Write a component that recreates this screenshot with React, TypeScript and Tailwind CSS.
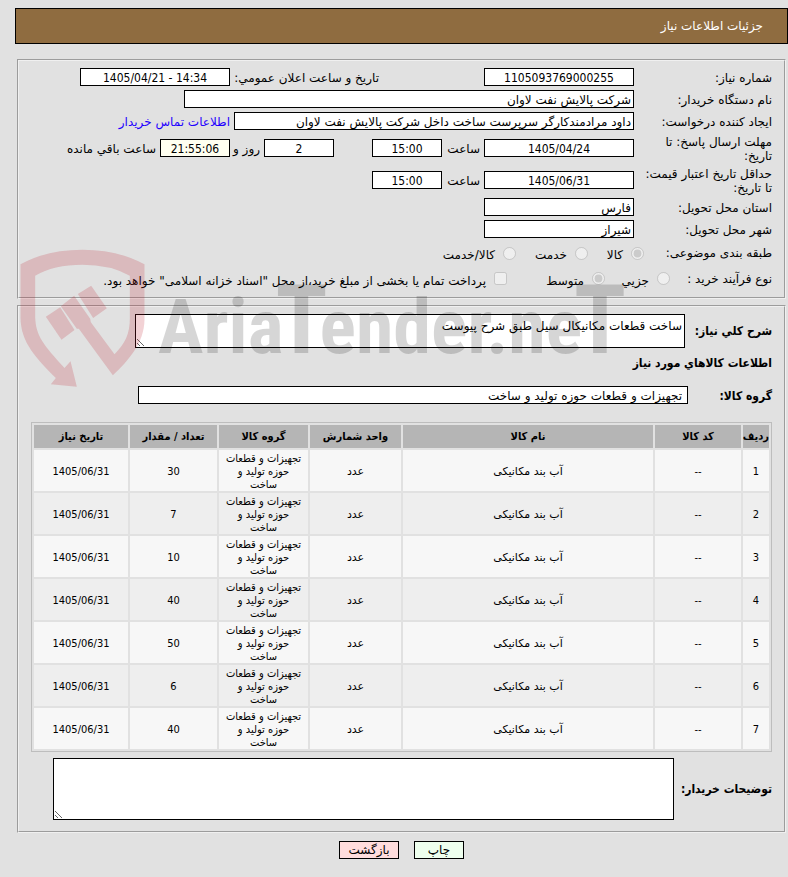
import React from 'react';

interface Item {
  id: number;
  code: string;
  name: string;
  unit: string;
  group: string;
  quantity: number;
  date: string;
}

const quantities = [30, 7, 10, 40, 50, 6, 40];

const items: Item[] = quantities.map((quantity, i) => ({
  id: i + 1,
  code: '--',
  name: 'آب بند مکانیکی',
  unit: 'عدد',
  group: 'تجهیزات و قطعات حوزه تولید و ساخت',
  quantity,
  date: '1405/06/31',
}));

// Narrower face for numbers, dates and bold captions
const condensed = "font-['DejaVu_Sans_Condensed','DejaVu_Sans',sans-serif]";

interface FieldProps {
  id: string;
  value: string;
  className?: string;
  label?: string;
  dir?: string;
}

const Field: React.FC<FieldProps> = ({ id, value, className = '', label, dir }) => (
  <input
    id={id}
    type="text"
    dir={dir}
    readOnly
    aria-label={label}
    defaultValue={value}
    className={`h-[18px] shrink-0 border border-black px-0.5 pt-px text-[12px] leading-[15px] ${className}`}
  />
);

const NumberField: React.FC<FieldProps> = ({ className = '', ...props }) => (
  <Field {...props} dir="ltr" className={`text-center ${condensed} ${className}`} />
);

interface RowProps {
  id: string;
  label: string;
  tall?: boolean;
  children: React.ReactNode;
}

const Row: React.FC<RowProps> = ({ id, label, tall, children }) => (
  <div className={`flex items-center gap-1 ${tall ? 'h-8' : 'h-[22px]'}`}>
    <label htmlFor={id} className="w-[134px] shrink-0 pt-0.5 leading-[14px]">{label}</label>
    {children}
  </div>
);

const Watermark: React.FC = () => (
  <div aria-hidden="true" className="pointer-events-none absolute top-[248px] left-[19px] flex" dir="ltr">
    <svg viewBox="57 55 380 420" className="h-[140px] w-[127px] shrink-0 fill-[#be1e2d]/20">
      <path d="M61 104 Q140 60 247 60 Q352 60 433 104 V270 C432 340 385 392 338 437 L236 297 L230 297 L182 230 L222 198 L270 267 L272 278 L343 374 C375 340 389 315 389 265 V138 Q330 105 247 105 Q160 105 105 138 V262 C107 320 130 345 193 415 L211 395 L230 471 L152 464 L167 445 C110 387 61 340 61 262 Z" />
      <path d="M137 261 L180 233 L223 301 L184 330 Z" />
      <path d="M233 193 L273 168 L320 236 L279 265 Z" />
    </svg>
    <div className="pt-[22px] pl-3 font-['Roboto_Condensed','Roboto',sans-serif] text-[76px] leading-[112px] font-bold whitespace-nowrap text-black/16">
      Aria<span className="-mx-2 text-[96px] leading-[100px]">T</span>ender.ne<span className="-ml-2 text-[96px] leading-[100px]">T</span>
    </div>
  </div>
);

const App: React.FC = () => {
  return (
    <div
      dir="rtl"
      lang="fa"
      className="relative min-h-screen bg-[#e1e1e1] pt-2 pb-4 font-['DejaVu_Sans',sans-serif] text-[12px] leading-[14px] text-black"
    >
      <header className="ml-[15px] flex h-9 items-center border border-black bg-[#8f6c40] pr-6 text-white">
        <h1>جزئیات اطلاعات نیاز</h1>
      </header>

      <main className="mt-[15px] mr-[2px] ml-[17px]">
        <section className="border-2 border-[#f0f0f0] px-3 pt-[5px] pb-1.5 [border-style:groove]">
          <Row id="number" label="شماره نیاز:">
            <NumberField id="number" value="1105093769000255" className="w-[150px] bg-white" />
            <label htmlFor="announced" className="mr-[101px] w-[145px] shrink-0 pt-0.5 whitespace-nowrap">تاریخ و ساعت اعلان عمومي:</label>
            <NumberField id="announced" value="1405/04/21 - 14:34" className="w-[150px] bg-white" />
          </Row>
          <Row id="buyer" label="نام دستگاه خریدار:">
            <Field id="buyer" value="شرکت پالایش نفت لاوان" className="w-[450px] bg-white" />
          </Row>
          <Row id="creator" label="ایجاد کننده درخواست:">
            <Field id="creator" value="داود مرادمندکارگر سرپرست ساخت داخل شرکت پالایش نفت لاوان" className="w-[400px] bg-white" />
            <a href="#contact" className="pt-0.5 whitespace-nowrap text-[#1f00ff]">اطلاعات تماس خریدار</a>
          </Row>
          <Row id="deadline" label="مهلت ارسال پاسخ: تا تاریخ:" tall>
            <NumberField id="deadline" value="1405/04/24" className="w-[150px] bg-white" />
            <label htmlFor="deadline-time" className="w-[34px] shrink-0 pt-0.5 whitespace-nowrap">ساعت</label>
            <NumberField id="deadline-time" value="15:00" className="w-[70px] bg-white" />
            <NumberField id="days" value="2" label="روز" className="mr-[34px] w-[70px] bg-white" />
            <span className="w-[26px] shrink-0 pt-0.5 whitespace-nowrap">روز و</span>
            <NumberField id="remaining" value="21:55:06" label="زمان" className="w-[70px] bg-[#fffff0]" />
            <span className="pt-0.5 whitespace-nowrap">ساعت باقي مانده</span>
          </Row>
          <Row id="validity" label="حداقل تاریخ اعتبار قیمت: تا تاریخ:" tall>
            <NumberField id="validity" value="1405/06/31" className="w-[150px] bg-white" />
            <label htmlFor="validity-time" className="w-[34px] shrink-0 pt-0.5 whitespace-nowrap">ساعت</label>
            <NumberField id="validity-time" value="15:00" className="w-[70px] bg-white" />
          </Row>
          <Row id="province" label="استان محل تحویل:">
            <Field id="province" value="فارس" className="w-[150px] bg-white" />
          </Row>
          <Row id="city" label="شهر محل تحویل:">
            <Field id="city" value="شیراز" className="w-[150px] bg-white" />
          </Row>

          <div role="radiogroup" aria-label="طبقه بندی موضوعی" className="flex h-[26px] items-center whitespace-nowrap">
            <span className="w-[128px] shrink-0">طبقه بندی موضوعی:</span>
            <label className="flex w-[56px] shrink-0 items-center gap-2">
              <input type="radio" name="category" disabled defaultChecked className="size-[13px]" />
              <span className="pt-1">کالا</span>
            </label>
            <label className="flex w-[72px] shrink-0 items-center gap-2">
              <input type="radio" name="category" disabled className="size-[13px]" />
              <span className="pt-1">خدمت</span>
            </label>
            <label className="flex items-center gap-2">
              <input type="radio" name="category" disabled className="size-[13px]" />
              <span className="pt-1">کالا/خدمت</span>
            </label>
          </div>
          <div role="radiogroup" aria-label="نوع فرآیند خرید" className="flex h-[25px] items-center whitespace-nowrap">
            <span className="w-[102px] shrink-0">نوع فرآیند خرید :</span>
            <label className="flex w-[65px] shrink-0 items-center gap-2">
              <input type="radio" name="process" disabled className="size-[13px]" />
              <span className="pt-1">جزیي</span>
            </label>
            <label className="flex w-[98px] shrink-0 items-center gap-2">
              <input type="radio" name="process" disabled defaultChecked className="size-[13px]" />
              <span className="pt-1">متوسط</span>
            </label>
            <label className="flex items-center gap-2">
              <input type="checkbox" disabled className="size-[13px]" />
              <span className="pt-1">پرداخت تمام یا بخشی از مبلغ خرید،از محل "اسناد خزانه اسلامی" خواهد بود.</span>
            </label>
          </div>
        </section>

        <section className="mt-1.5 border-2 border-[#f0f0f0] px-3 pt-[7px] pb-[11px] [border-style:groove]">
          <div className="flex items-center">
            <label htmlFor="description" className={`w-[87px] shrink-0 font-bold whitespace-nowrap ${condensed}`}>شرح کلي نیاز:</label>
            <textarea
              id="description"
              readOnly
              defaultValue="ساخت قطعات مکانیکال سیل طبق شرح پیوست"
              className="block h-[34px] w-[550px] border border-black bg-white px-0.5 py-1"
            />
          </div>
          <h2 className={`mt-2 font-bold ${condensed}`}>اطلاعات کالاهاي مورد نیاز</h2>
          <div className="mt-4 flex items-center">
            <label htmlFor="group" className={`w-[84px] shrink-0 pt-0.5 font-bold ${condensed}`}>گروه کالا:</label>
            <Field id="group" value="تجهیزات و قطعات حوزه تولید و ساخت" className="w-[550px] bg-white pr-[5px]" />
          </div>

          <table className="mt-[18px] w-full table-fixed border-separate border-spacing-[2px] border border-[#bdbdbd] text-center text-[11px] leading-[13px]">
            <colgroup>
              <col className="w-[26px]" />
              <col className="w-[86px]" />
              <col />
              <col className="w-[91px]" />
              <col className="w-[89px]" />
              <col className="w-[87px]" />
              <col className="w-[94px]" />
            </colgroup>
            <thead>
              <tr className={`h-[23px] bg-[#b5b5b5] whitespace-nowrap ${condensed}`}>
                <th className="p-0">ردیف</th>
                <th className="p-0">کد کالا</th>
                <th className="p-0">نام کالا</th>
                <th className="p-0">واحد شمارش</th>
                <th className="p-0">گروه کالا</th>
                <th className="p-0">تعداد / مقدار</th>
                <th className="p-0">تاریخ نیاز</th>
              </tr>
            </thead>
            <tbody>
              {items.map((item) => (
                <tr key={item.id} className="h-[41px] odd:bg-[#f7f7f7] even:bg-[#eeeeee]">
                  <td className={`p-0 pt-0.5 ${condensed}`}>{item.id}</td>
                  <td className={`p-0 pt-0.5 ${condensed}`}>{item.code}</td>
                  <td className="p-0 pt-0.5">{item.name}</td>
                  <td className="p-0 pt-0.5">{item.unit}</td>
                  <td className={`px-1 pt-0.5 pb-0 ${condensed}`}>{item.group}</td>
                  <td className={`p-0 pt-0.5 ${condensed}`}>{item.quantity}</td>
                  <td className={`p-0 pt-0.5 ${condensed}`}>{item.date}</td>
                </tr>
              ))}
            </tbody>
          </table>

          <div className="mt-1.5 flex items-center">
            <label htmlFor="comments" className={`w-[98px] shrink-0 font-bold whitespace-nowrap ${condensed}`}>توضیحات خریدار:</label>
            <textarea id="comments" readOnly className="ml-[22px] block h-[62px] flex-1 border border-black bg-white px-0.5" />
          </div>
        </section>
      </main>

      <div className="mt-2 ml-[15px] flex justify-center gap-[15px]">
        <button type="button" className="h-[18px] w-[50px] border border-black bg-[#eeffee]">چاپ</button>
        <button type="button" className="h-[18px] w-[60px] border border-black bg-[#ffdddd]">بازگشت</button>
      </div>

      <Watermark />
    </div>
  );
};

export default App;
